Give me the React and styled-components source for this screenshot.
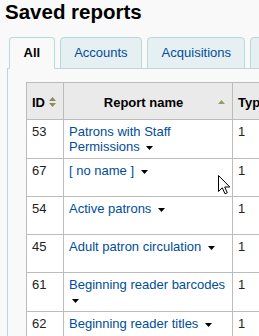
import React from "react"
import styled, {createGlobalStyle} from "styled-components"

const GlobalStyle = createGlobalStyle`
  html, body {
    margin: 0;
    padding: 0;
    overflow: hidden;
    background: #f9f9f9;
  }
  body {
    font-family: "Liberation Sans", Arial, sans-serif;
    font-size: 13px;
    color: #222;
  }
`

const Page = styled.div`
  position: relative;
  width: 259px;
  height: 336px;
  overflow: hidden;
`

const Title = styled.h1`
  margin: 0 0 0 5px;
  font-size: 20.5px;
  line-height: 24px;
  font-weight: bold;
  color: #000;
`

const Tabs = styled.ul`
  list-style: none;
  display: flex;
  gap: 5px;
  margin: 13px 0 -1px 9px;
  padding: 0;
  position: relative;
  z-index: 1;
`

const Tab = styled.li`
  flex: none;
  height: 30px;
  line-height: 30px;
  padding: 0 13.5px;
  border: 1px solid #b9d8d9;
  border-radius: 4px 4px 0 0;
  background: ${props => props.$active ? "#f9f9f9" : "#e6f0f2"};
  border-bottom-color: ${props => props.$active ? "#f9f9f9" : "#b9d8d9"};
  color: ${props => props.$active ? "#000" : "#004d99"};
  font-weight: ${props => props.$active ? "bold" : "normal"};
  white-space: nowrap;
`

const Panel = styled.div`
  width: 700px;
  margin-left: 7px;
  padding: 13px 0 0 18px;
  border-top: 1px solid #b9d8d9;
  border-left: 1px solid #b9d8d9;
  background: #f9f9f9;
  height: 400px;
`

const Table = styled.table`
  border-collapse: collapse;
  table-layout: fixed;
  width: 560px;
  background: #fff;
  border: 1px solid #bcbcbc;
`

const Th = styled.th`
  height: 37px;
  box-sizing: border-box;
  padding: 2px 0 0;
  border: 1px solid #bcbcbc;
  background: #eaeaea;
  color: #000;
  font-weight: bold;
  line-height: 15px;
  vertical-align: middle;
`

const HeadLeft = styled.div`
  display: flex;
  align-items: center;
  gap: 4px;
  padding-left: 5px;
`

const HeadCentered = styled.div`
  display: grid;
  grid-template-columns: 1fr auto;
  align-items: center;
  padding: 0 7px 0 5px;
  text-align: center;
`

const Row = styled.tr`
  height: 38px;
`

const Td = styled.td`
  box-sizing: border-box;
  padding: 4px 5px;
  border: 1px solid #bcbcbc;
  line-height: 15px;
  vertical-align: top;
  color: #222;
`

const ReportLink = styled.a`
  color: #004d99;
  text-decoration: none;
`

const Caret = styled.svg`
  margin-left: 3px;
  vertical-align: 1px;
`

const Cursor = styled.svg`
  position: absolute;
  left: 218px;
  top: 175px;
`

const SortBoth = () => (
  <svg width="7" height="10" viewBox="0 0 7 10">
    <polygon points="3.5,0 7,4 0,4" fill="#8c8c5a"/>
    <polygon points="0,6 7,6 3.5,10" fill="#8c8c5a"/>
  </svg>
)

const SortUp = () => (
  <svg width="7" height="4" viewBox="0 0 7 4">
    <polygon points="3.5,0 7,4 0,4" fill="#9a9a62"/>
  </svg>
)

const DropCaret = () => (
  <Caret width="7" height="4" viewBox="0 0 7 4">
    <polygon points="0,0 7,0 3.5,4" fill="#000"/>
  </Caret>
)

const reports = [
  {id: 53, name: "Patrons with Staff Permissions"},
  {id: 67, name: "[ no name ]"},
  {id: 54, name: "Active patrons"},
  {id: 45, name: "Adult patron circulation"},
  {id: 61, name: "Beginning reader barcodes"},
  {id: 62, name: "Beginning reader titles"},
]

export default function App() {
  return (
    <Page>
      <GlobalStyle/>
      <Title>Saved reports</Title>
      <Tabs>
        <Tab $active>All</Tab>
        <Tab>Accounts</Tab>
        <Tab>Acquisitions</Tab>
        <Tab>Catalog</Tab>
      </Tabs>
      <Panel>
        <Table>
          <colgroup>
            <col style={{width: 37}}/>
            <col style={{width: 169}}/>
            <col style={{width: 80}}/>
            <col/>
          </colgroup>
          <thead>
            <tr>
              <Th><HeadLeft>ID <SortBoth/></HeadLeft></Th>
              <Th><HeadCentered><span>Report name</span><SortUp/></HeadCentered></Th>
              <Th><HeadLeft>Type</HeadLeft></Th>
              <Th><HeadLeft>Notes</HeadLeft></Th>
            </tr>
          </thead>
          <tbody>
            {reports.map(r => (
              <Row key={r.id}>
                <Td>{r.id}</Td>
                <Td><ReportLink href="#">{r.name}</ReportLink> <DropCaret/></Td>
                <Td>1</Td>
                <Td></Td>
              </Row>
            ))}
          </tbody>
        </Table>
      </Panel>
      <Cursor width="13" height="20" viewBox="0 0 13 20">
        <path d="M0.5 0.5 L0.5 16.5 L4.3 12.8 L7 18.8 L9.3 17.8 L6.7 12 L11.8 12 Z" fill="#fff" stroke="#000" strokeWidth="1" strokeLinejoin="miter"/>
      </Cursor>
    </Page>
  )
}
